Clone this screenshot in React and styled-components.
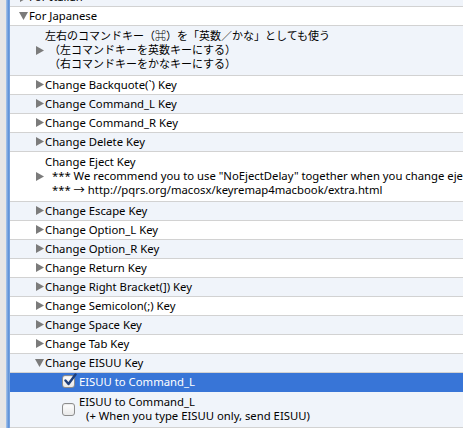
import React from 'react'
import styled, { createGlobalStyle } from 'styled-components'

const GlobalStyle = createGlobalStyle`
  html, body {
    margin: 0;
    padding: 0;
    background: #ffffff;
    overflow: hidden;
  }
  body {
    font-family: "Noto Sans", "Noto Sans CJK JP", sans-serif;
    font-size: 11.3px;
    color: #000;
  }
`;

const Page = styled.div`
  display: flex;
  width: 463px;
  height: 428px;
  overflow: hidden;
`;

const Gutter = styled.div`
  flex: 0 0 6px;
  background: #e6e6e6;
`;

const FocusRing = styled.div`
  flex: 0 0 4px;
  background: linear-gradient(to right, #a9c6ea, #5f93d9 60%, #7fa8df);
`;

const Outline = styled.div`
  flex: 1;
  min-width: 0;
  margin-top: -12px;
  display: flex;
  flex-direction: column;
`;

const Row = styled.div`
  display: flex;
  align-items: center;
  min-height: 19px;
  padding: ${(p) => (p.multi ? '4px 0' : '0')};
  padding-left: ${(p) => 8 + p.level * 16}px;
  box-sizing: border-box;
  white-space: nowrap;
  background: ${(p) => (p.selected ? '#3875d7' : p.alt ? '#f0f4fa' : '#ffffff')};
  color: ${(p) => (p.selected ? '#ffffff' : '#000000')};
  border-bottom: 1px solid ${(p) => (p.selected ? '#3875d7' : '#d2d2d2')};
`;

const Slot = styled.span`
  flex: 0 0 11px;
  display: flex;
  align-items: center;
  justify-content: center;
`;

const Label = styled.div`
  display: flex;
  flex-direction: column;
  line-height: 14px;
  margin-left: ${(p) => p.gap || 0}px;
`;

const Line = styled.span`
  padding-left: ${(p) => p.indent || 0}px;
  font-size: ${(p) => (p.jp ? '11px' : 'inherit')};
  line-height: 14px;
`;

const Box = styled.span`
  flex: 0 0 13px;
  height: 13px;
  margin-left: 1px;
  box-sizing: border-box;
  border: 1px solid #8d8d8d;
  border-radius: 3px;
  background: linear-gradient(#ffffff, #e9e9e9);
  box-shadow: inset 0 1px 1px rgba(0, 0, 0, 0.08);
  display: flex;
  align-items: center;
  justify-content: center;
`;

const Arrow = ({ open }) =>
  open ? (
    <svg width="9" height="8" viewBox="0 0 9 8">
      <path d="M0 0 L9 0 L4.5 8 Z" fill="#7b7b7b" />
    </svg>
  ) : (
    <svg width="8" height="9" viewBox="0 0 8 9">
      <path d="M0 0 L8 4.5 L0 9 Z" fill="#7b7b7b" />
    </svg>
  );

const Check = () => (
  <svg width="14" height="14" viewBox="0 0 14 14" style={{ marginTop: -3, marginRight: -3 }}>
    <path d="M2.5 7.5 L5.5 11 L12.5 1.5" fill="none" stroke="#1f3f7a" strokeWidth="2.4" strokeLinecap="round" strokeLinejoin="round" />
  </svg>
);

const keys = ['Backquote(`)', 'Command_L', 'Command_R', 'Delete'];
const keys2 = [
  'Escape', 'Option_L', 'Option_R', 'Return', 'Right Bracket(])', 'Semicolon(;)', 'Space', 'Tab',
];

export default function App() {
  let i = 0;
  const alt = () => i++ % 2 === 0;
  return (
    <Page>
      <GlobalStyle />
      <Gutter />
      <FocusRing />
      <Outline>
        <Row level={0} alt={alt()}>
          <Slot><Arrow /></Slot>
          <Label>For Italian</Label>
        </Row>
        <Row level={0} alt={alt()}>
          <Slot><Arrow open /></Slot>
          <Label>For Japanese</Label>
        </Row>
        <Row level={1} alt={alt()} multi>
          <Slot><Arrow /></Slot>
          <Label>
            <Line jp>左右のコマンドキー（⌘）を「英数／かな」としても使う</Line>
            <Line jp indent={4}>（左コマンドキーを英数キーにする）</Line>
            <Line jp indent={4}>（右コマンドキーをかなキーにする）</Line>
          </Label>
        </Row>
        {keys.map((k) => (
          <Row key={k} level={1} alt={alt()}>
            <Slot><Arrow /></Slot>
            <Label>Change {k} Key</Label>
          </Row>
        ))}
        <Row level={1} alt={alt()} multi>
          <Slot><Arrow /></Slot>
          <Label>
            <Line>Change Eject Key</Line>
            <Line indent={7}>*** We recommend you to use "NoEjectDelay" together when you change eject key.</Line>
            <Line indent={7}>*** → http://pqrs.org/macosx/keyremap4macbook/extra.html</Line>
          </Label>
        </Row>
        {keys2.map((k) => (
          <Row key={k} level={1} alt={alt()}>
            <Slot><Arrow /></Slot>
            <Label>Change {k} Key</Label>
          </Row>
        ))}
        <Row level={1} alt={alt()}>
          <Slot><Arrow open /></Slot>
          <Label>Change EISUU Key</Label>
        </Row>
        <Row level={2} selected alt={alt()}>
          <Slot />
          <Box><Check /></Box>
          <Label gap={4}>EISUU to Command_L</Label>
        </Row>
        <Row level={2} alt={alt()} multi>
          <Slot />
          <Box />
          <Label gap={4}>
            <Line>EISUU to Command_L</Line>
            <Line indent={7}>(+ When you type EISUU only, send EISUU)</Line>
          </Label>
        </Row>
      </Outline>
    </Page>
  );
}
